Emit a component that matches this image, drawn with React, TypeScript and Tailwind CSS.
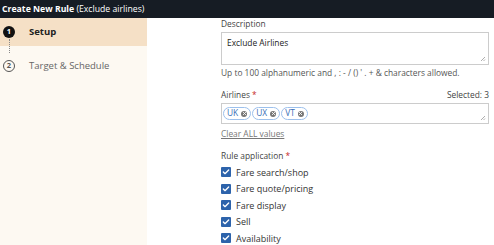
import { Check, X } from 'lucide-react';

const apps = ['Fare search/shop', 'Fare quote/pricing', 'Fare display', 'Sell', 'Availability'];
const airlines = ['UK', 'UX', 'VT'];

function Resize() {
  return (
    <svg width="6" height="6" viewBox="0 0 6 6" className="absolute right-[2px] bottom-[2px]">
      <path d="M5 1 L1 5 M5 3.5 L3.5 5" stroke="#999" strokeWidth="0.8" />
    </svg>
  );
}

export default function App() {
  return (
    <div className="w-[494px] h-[245px] overflow-hidden bg-white text-[#333] font-['Open_Sans',sans-serif]">
      <header className="h-[18px] bg-[#161c24] text-white text-[8.7px] leading-[18px] px-[2px] whitespace-nowrap">
        <span className="font-bold">Create New Rule</span> (Exclude airlines)
      </header>
      <div className="flex h-[227px]">
        <aside className="w-[147px] shrink-0 bg-[#fdf9f2]">
          <div className="h-[28px] bg-[#f5e0c6] flex items-center pl-[3px] relative">
            <span className="w-[12px] h-[12px] rounded-full bg-[#111] text-white text-[7.5px] font-bold flex items-center justify-center leading-none">1</span>
            <span className="ml-[14px] text-[9.5px] font-bold text-[#222]">Setup</span>
            <span className="absolute left-[9px] top-[21px] h-[14px] border-l border-dotted border-[#888]" />
          </div>
          <div className="h-[40px] flex items-center pl-[3px]">
            <span className="w-[12px] h-[12px] rounded-full border-[1.5px] border-[#555] text-[#555] text-[7.5px] font-bold flex items-center justify-center leading-none">2</span>
            <span className="ml-[14px] text-[9.5px] text-[#666]">Target &amp; Schedule</span>
          </div>
        </aside>
        <main className="flex-1 min-w-0 pl-[74px] pr-[5px] text-[8.4px]">
          <div className="leading-[12px] text-[#444]">Description</div>
          <div className="relative mt-[2px] h-[33px] border border-[#ccc] px-[5px] pt-[4px] leading-[12px] text-[#222]">
            Exclude Airlines
            <Resize />
          </div>
          <div className="mt-[2px] leading-[12px] text-[#555] whitespace-nowrap">Up to 100 alphanumeric and , : - / () ' . + &amp; characters allowed.</div>
          <div className="mt-[10px] flex justify-between leading-[12px] text-[#444]">
            <span>Airlines <span className="text-[#c62828]">*</span></span>
            <span>Selected: 3</span>
          </div>
          <div className="relative mt-[2px] h-[21px] border border-[#ccc] flex items-center gap-[1px] px-[1px]">
            {airlines.map((a) => (
              <span key={a} className="h-[13px] flex items-center gap-[3px] rounded-full border border-[#9cc0ec] pl-[3px] pr-[3px] text-[8.4px] text-[#3a6fb7] leading-none">
                {a}
                <span className="w-[6px] h-[6px] rounded-full bg-[#777] flex items-center justify-center">
                  <X size={5} strokeWidth={4} color="white" />
                </span>
              </span>
            ))}
            <Resize />
          </div>
          <div className="mt-[4px] leading-[12px] text-[#777] underline">Clear ALL values</div>
          <div className="mt-[10px] leading-[12px] text-[#444]">Rule application <span className="text-[#c62828]">*</span></div>
          <div className="mt-[2px] flex flex-col">
            {apps.map((a) => (
              <label key={a} className="h-[16.5px] flex items-center gap-[5px] text-[#333] text-[9px]">
                <span className="w-[10px] h-[10px] rounded-[1px] bg-[#2d63ab] flex items-center justify-center">
                  <Check size={8} strokeWidth={4} color="white" />
                </span>
                {a}
              </label>
            ))}
          </div>
        </main>
      </div>
    </div>
  );
}
